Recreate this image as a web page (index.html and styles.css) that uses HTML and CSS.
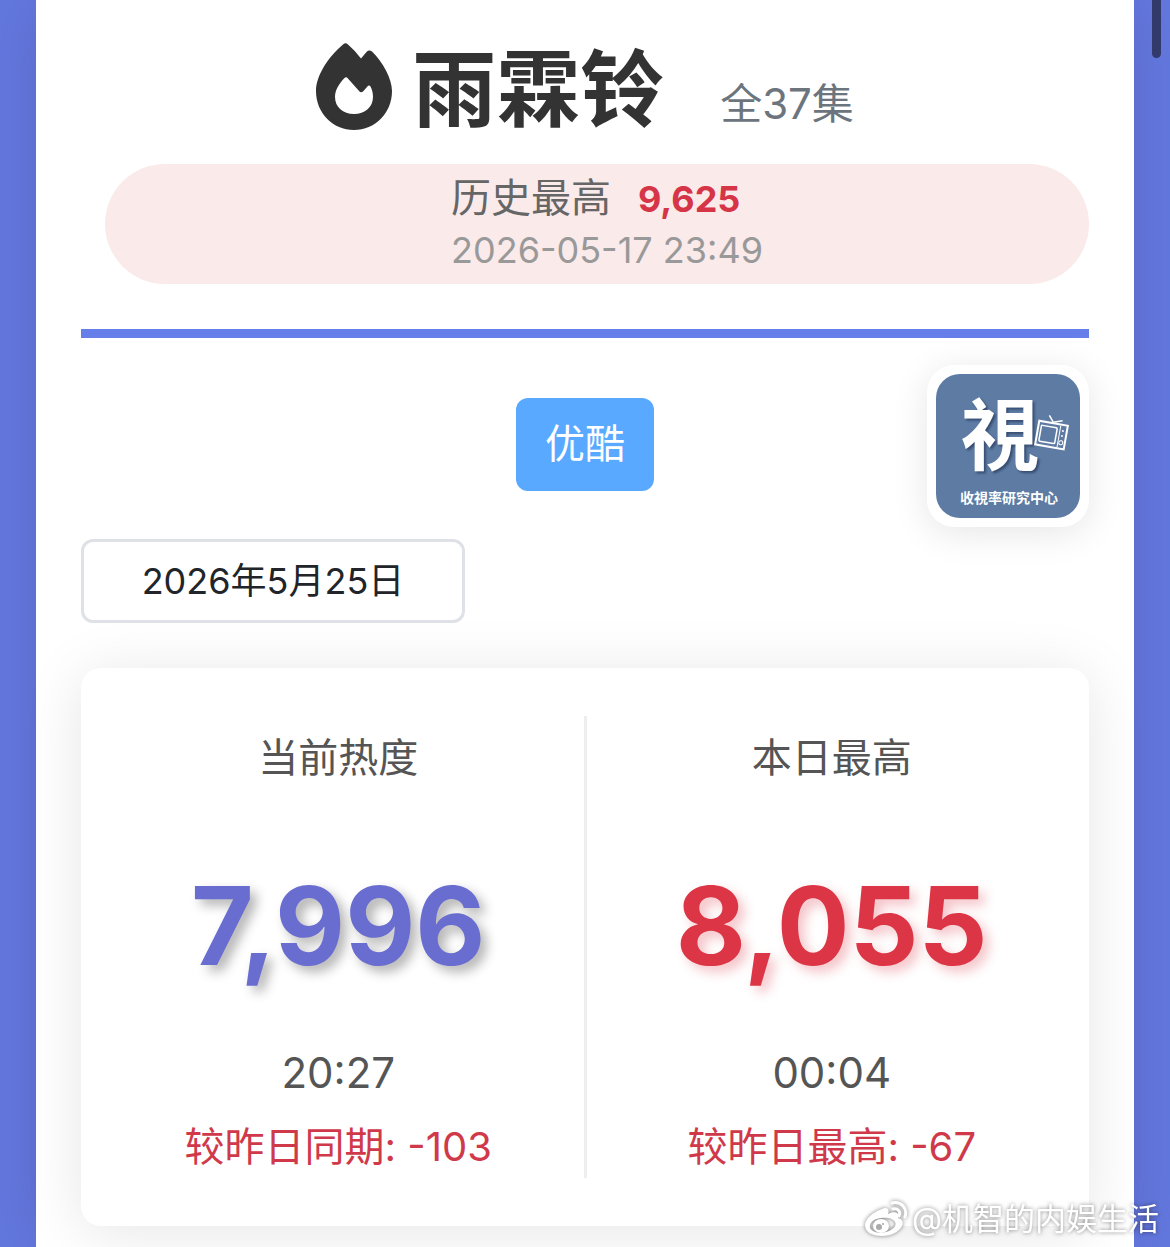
FILE: index.html
```
<!DOCTYPE html>
<html lang="zh-CN">

<head>
    <meta charset="UTF-8">
    <meta name="viewport" content="width=device-width, initial-scale=1.0">
    <title>雨霖铃</title>
    <link rel="stylesheet" href="styles.css">
</head>

<body>

    <main class="container">
        <header class="header">
            <div class="title-row">
                <svg class="fire" viewBox="0 0 76 87" aria-hidden="true">
                    <path fill="#333" fill-rule="evenodd" d="M27 1.500Q29.500-.8 32 1.500Q39 7.500 45 15.500L50.500 9Q53 6.500 56 8.500C67 19 76 36 76 48C76 70 59 87 38 87C17 87 0 70 0 48C0 33 12 14 27 1.500ZM28 35.500C23 41 19 47 19 54C19 64 27 71 38 71C49 71 57 64 57 54C57 50 56 46 54.500 43.500C53.500 42 52.500 42 51 44L47 48.500Q45 50 43.500 48.500L31.500 35Q30 33.500 28 35.500Z" />
                </svg>
                <h1>雨霖铃</h1>
                <span class="episodes">全37集</span>
            </div>
            <div class="record">
                <div class="record-text">
                    <div class="record-top">
                        <span>历史最高</span>
                        <strong>9,625</strong>
                    </div>
                    <div class="record-time">2026-05-17 23:49</div>
                </div>
            </div>
        </header>

        <div class="platform-row">
            <button type="button" class="platform">优酷</button>
            <div class="brand">
                <svg viewBox="0 0 144 144" role="img" aria-label="收視率研究中心">
                    <rect width="144" height="144" rx="24" fill="#5d7ba3" />
                    <text class="brand-char" x="64" y="90" text-anchor="middle">視</text>
                    <g transform="translate(115 61) rotate(10)">
                        <path d="M-5-19L0-13L9-16" fill="none" stroke="#fff" stroke-width="1.500" />
                        <rect x="-14" y="-12" width="29" height="24" fill="#5d7ba3" stroke="#fff" stroke-width="2" />
                        <rect x="-11" y="-8" width="16" height="16" rx="1" fill="none" stroke="#fff" stroke-width="1.500" />
                        <path d="M8-11V11" stroke="#fff" />
                        <circle cx="11" cy="-6" r="1" fill="#fff" />
                        <circle cx="11" cy="-1" r="1" fill="#fff" />
                        <circle cx="11" cy="6" r="2" fill="none" stroke="#fff" />
                    </g>
                    <text class="brand-name" x="73" y="129" text-anchor="middle">收視率研究中心</text>
                </svg>
            </div>
        </div>

        <input class="date" type="text" value="2026年5月25日" aria-label="日期" readonly>

        <section class="stats">
            <div class="stat">
                <div class="label">当前热度</div>
                <div class="number">7,996</div>
                <div class="time">20:27</div>
                <div class="diff">较昨日同期: -103</div>
            </div>
            <div class="stat">
                <div class="label">本日最高</div>
                <div class="number highest">8,055</div>
                <div class="time">00:04</div>
                <div class="diff">较昨日最高: -67</div>
            </div>
        </section>
    </main>

    <div class="scroll-thumb"></div>

    <div class="watermark">
        <svg viewBox="0 0 44 36" aria-hidden="true">
            <path fill="#fff" fill-rule="evenodd" d="M18 8C23 5 26 9 24 13C30 10 36 11 34 17C38 18 40 21 38 25C35 31 27 35 18 35C8 35 1 31 1 24C1 18 9 11 18 8ZM17 17C9 18 5 22 6 27C8 31 15 33 22 31C29 29 33 25 31 21C29 17 23 16 17 17Z" />
            <ellipse cx="17" cy="25" rx="8" ry="7" fill="#fff" />
            <circle cx="15" cy="26" r="3" fill="#aaa" />
            <circle cx="19" cy="23" r="1" fill="#aaa" />
            <path d="M28 2C37 0 44 7 41 16M29 8C34 7 37 11 35 15" fill="none" stroke="#fff" stroke-width="3" stroke-linecap="round" />
        </svg>
        <span>@机智的内娱生活</span>
    </div>

</body>

</html>
```

FILE: styles.css
```
* {
    box-sizing: border-box;
}

body {
    margin: 0;
    padding: 0 36px;
    min-height: 100vh;
    background-color: #6379df;
    font-family: Inter, "Noto Sans CJK SC", sans-serif;
    color: #555;
}

.container {
    min-height: 100vh;
    padding: 32px 45px 20px;
    background-color: #fff;
    box-shadow: 0 0 60px rgba(70, 50, 130, 0.25);
}

.header {
    padding-bottom: 45px;
    border-bottom: 9px solid #667eea;
}

.title-row {
    display: flex;
    align-items: center;
    justify-content: center;
    height: 108px;
    margin-bottom: 24px;
}

.fire {
    width: 76px;
    height: 87px;
    margin-right: 20px;
}

h1 {
    margin: 0 56px 0 0;
    padding-top: 8px;
    font-size: 84px;
    line-height: 108px;
    font-weight: 700;
    color: #333;
}

.episodes {
    font-size: 42px;
    line-height: 56px;
    padding-top: 36px;
    color: #6c757d;
}

.record {
    display: flex;
    justify-content: center;
    margin-left: 24px;
    padding: 8px 0 8px 20px;
    border-radius: 60px;
    background-color: #faeaea;
}

.record-top {
    display: flex;
    align-items: center;
    gap: 27px;
    font-size: 40px;
    line-height: 52px;
    color: #666;
}

.record-top strong {
    padding-top: 2px;
    font-size: 36px;
    line-height: 50px;
    color: #d63447;
}

.record-time {
    font-size: 36px;
    line-height: 52px;
    color: #999;
}

.platform-row {
    display: grid;
    grid-template-columns: 1fr auto 1fr;
    align-items: center;
    padding-top: 27px;
}

.platform {
    grid-column: 2;
    height: 93px;
    margin-bottom: 4px;
    padding: 0 29px 6px;
    border: 0;
    border-radius: 12px;
    background-color: #58a9ff;
    color: #fff;
    font-family: inherit;
    font-size: 40px;
}

.brand {
    justify-self: end;
    width: 162px;
    height: 162px;
    padding: 9px;
    border-radius: 27px;
    background-color: #fff;
    box-shadow: 0 6px 36px rgba(0, 0, 0, 0.1);
}

.brand svg {
    display: block;
    width: 100%;
}

.brand-char {
    font-family: "Noto Sans CJK TC", sans-serif;
    font-size: 78px;
    font-weight: 700;
    fill: #fff;
    filter: drop-shadow(2px 2px 1px rgba(30, 45, 80, 0.6));
}

.brand-name {
    font-family: "Noto Sans CJK TC", sans-serif;
    font-size: 14px;
    font-weight: 700;
    fill: #fff;
}

.date {
    display: block;
    width: 384px;
    height: 84px;
    margin-top: 12px;
    padding: 0 2px 6px;
    border: 3px solid #dee2e6;
    border-radius: 12px;
    background-color: #fff;
    color: #212529;
    font-family: inherit;
    font-size: 36px;
    text-align: center;
}

.stats {
    display: flex;
    margin-top: 45px;
    padding: 48px 12px;
    border-radius: 20px;
    background-color: #fff;
    box-shadow: 0 6px 60px rgba(0, 0, 0, 0.1);
}

.stat {
    flex: 1;
    padding: 14px 0 3px;
    text-align: center;
}

.stat + .stat {
    border-left: 3px solid #eee;
}

.label {
    font-size: 40px;
    line-height: 56px;
}

.number {
    margin: 74px 0 57px;
    font-size: 108px;
    line-height: 132px;
    font-weight: 700;
    color: #6a6dd0;
    text-shadow: 6px 6px 12px rgba(0, 0, 0, 0.3);
}

.number.highest {
    color: #dc3545;
    text-shadow: 6px 6px 12px rgba(220, 53, 69, 0.3);
}

.time {
    font-size: 42px;
    line-height: 48px;
}

.diff {
    margin-top: 22px;
    font-size: 40px;
    line-height: 56px;
    color: #d0394a;
}

/* 捲軸 */
.scroll-thumb {
    position: fixed;
    top: 0;
    right: 9px;
    width: 9px;
    height: 58px;
    border-radius: 0 0 5px 5px;
    background-color: #32396b;
}

/* 浮水印 */
.watermark {
    position: fixed;
    right: 11px;
    bottom: 7px;
    display: flex;
    align-items: center;
    gap: 4px;
    color: #fff;
    font-size: 31px;
    line-height: 42px;
    text-shadow: 0 0 4px rgba(0, 0, 0, 0.5);
}

.watermark svg {
    width: 44px;
    height: 36px;
    filter: drop-shadow(0 0 2px rgba(0, 0, 0, 0.5));
}
```
